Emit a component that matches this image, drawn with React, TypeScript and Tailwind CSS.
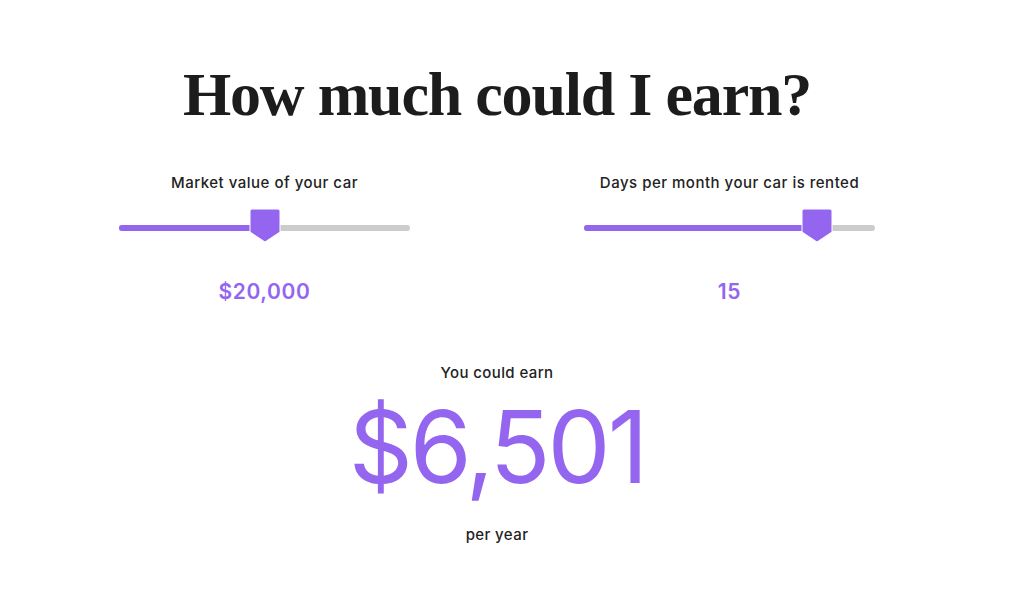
import React from 'react';

const purple = '#9466f0';

function Thumb() {
  return (
    <svg width="32" height="35" viewBox="0 0 32 35" className="absolute top-[-17px] -translate-x-1/2">
      <path d="M3 1 H29 a2 2 0 0 1 2 2 V24 L16 34 L1 24 V3 a2 2 0 0 1 2-2 Z" fill={purple} stroke="#ffffff" strokeWidth="1" />
    </svg>
  );
}

function Slider({ label, value, pct }: { label: string; value: string; pct: number }) {
  return (
    <div className="flex flex-col items-center">
      <p className="text-[15px] font-medium leading-5 tracking-[0.5px] text-[#222222]">{label}</p>
      <div className="relative mt-[32px] h-[6px] w-[291px] rounded-full bg-[#cccccc]">
        <div className="h-full rounded-full bg-[#9466f0]" style={{ width: `${pct}%` }} />
        <div className="absolute left-0 top-0 h-full w-full">
          <div className="relative h-full" style={{ marginLeft: `${pct}%` }}>
            <Thumb />
          </div>
        </div>
      </div>
      <p className="mt-[49px] text-[21px] font-semibold leading-6 tracking-[0.6px] text-[#9466f0]">{value}</p>
    </div>
  );
}

export default function App() {
  return (
    <main className="min-h-screen bg-white pr-[30px] pt-[65px] font-['Inter',sans-serif]">
      <h1 className="-mt-[4px] text-center font-['Liberation_Serif',serif] text-[62px] font-bold leading-[66px] tracking-[-1.2px] text-[#1c1c1c]">
        How much could I earn?
      </h1>
      <div className="mx-auto mt-[46px] grid w-[930px] grid-cols-2">
        <Slider label="Market value of your car" value="$20,000" pct={50} />
        <Slider label="Days per month your car is rented" value="15" pct={80} />
      </div>
      <div className="mt-[59px] flex flex-col items-center">
        <p className="text-[15px] font-medium leading-5 tracking-[0.4px] text-[#222222]">You could earn</p>
        <p className="mt-[6px] text-[100px] leading-[116px] tracking-[-3px] text-[#9466f0]">$6,501</p>
        <p className="mt-[20px] text-[15px] font-medium leading-5 tracking-[0.4px] text-[#222222]">per year</p>
      </div>
    </main>
  );
}
